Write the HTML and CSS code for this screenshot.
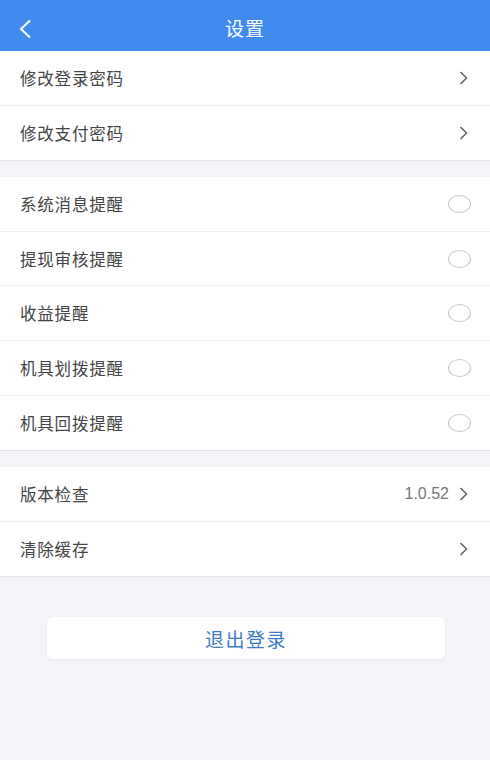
FILE: index.html
```html
<!DOCTYPE html>
<html>
<head>
  <meta charset="UTF-8">
  <title>设置</title>
  <link rel="stylesheet" href="styles.css">
</head>
<body>
  <!-- Title bar -->
  <header class="title-bar">
    <span class="back-btn">
      <svg width="14" height="20" viewBox="0 0 14 20"><path d="M12 1.5 L3 10 L12 18.5" fill="none" stroke="#fff" stroke-width="2"/></svg>
    </span>
    <h1 class="title">设置</h1>
  </header>

  <!-- Passwords -->
  <section class="group">
    <div class="row">
      <span class="label">修改登录密码</span>
      <span class="chevron"><svg width="9" height="14" viewBox="0 0 9 14"><path d="M1.5 1 L7.5 7 L1.5 13" fill="none" stroke="#666" stroke-width="1.6"/></svg></span>
    </div>
    <div class="row">
      <span class="label">修改支付密码</span>
      <span class="chevron"><svg width="9" height="14" viewBox="0 0 9 14"><path d="M1.5 1 L7.5 7 L1.5 13" fill="none" stroke="#666" stroke-width="1.6"/></svg></span>
    </div>
  </section>

  <!-- Notifications -->
  <section class="group">
    <div class="row">
      <span class="label">系统消息提醒</span>
      <span class="radio"></span>
    </div>
    <div class="row">
      <span class="label">提现审核提醒</span>
      <span class="radio"></span>
    </div>
    <div class="row">
      <span class="label">收益提醒</span>
      <span class="radio"></span>
    </div>
    <div class="row">
      <span class="label">机具划拨提醒</span>
      <span class="radio"></span>
    </div>
    <div class="row">
      <span class="label">机具回拨提醒</span>
      <span class="radio"></span>
    </div>
  </section>

  <!-- App -->
  <section class="group">
    <div class="row">
      <span class="label">版本检查</span>
      <span class="value">1.0.52</span>
      <span class="chevron"><svg width="9" height="14" viewBox="0 0 9 14"><path d="M1.5 1 L7.5 7 L1.5 13" fill="none" stroke="#666" stroke-width="1.6"/></svg></span>
    </div>
    <div class="row">
      <span class="label">清除缓存</span>
      <span class="chevron"><svg width="9" height="14" viewBox="0 0 9 14"><path d="M1.5 1 L7.5 7 L1.5 13" fill="none" stroke="#666" stroke-width="1.6"/></svg></span>
    </div>
  </section>

  <div class="logout-wrap">
    <div class="logout-btn">退出登录</div>
  </div>
</body>
</html>
```

FILE: styles.css
```css
/* ========== PAGE ========== */
html, body {
  margin: 0;
  padding: 0;
}

body {
  background: #f4f5f9;
  font-family: "Noto Sans CJK SC", "Noto Sans", sans-serif;
  min-height: 760px;
}

/* ========== TITLE BAR ========== */
.title-bar {
  height: 51px;
  background: #418bef;
  display: flex;
  align-items: center;
  justify-content: center;
  position: relative;
}

.back-btn {
  position: absolute;
  left: 18px;
  top: 19px;
  display: flex;
}

.title {
  margin: 4px 0 0;
  font-size: 19px;
  font-weight: normal;
  color: #fff;
  letter-spacing: 1px;
}

/* ========== GROUPS & ROWS ========== */
.group {
  background: #fff;
  margin-bottom: 16px;
  border-bottom: 1px solid #e6e7ec;
}

.row {
  height: 54.6px;
  box-sizing: border-box;
  display: flex;
  align-items: center;
  padding: 0 19px 0 20px;
  border-bottom: 1px solid #eeeff3;
}

.row:last-child {
  border-bottom: none;
}

.label {
  flex: 1;
  font-size: 16.5px;
  color: #444;
  letter-spacing: 0.8px;
}

.value {
  font-size: 16px;
  color: #777;
  margin-right: 10px;
  font-family: "Liberation Sans", "Noto Sans", sans-serif;
}

.chevron {
  display: flex;
  margin-right: 3px;
}

/* Unchecked switch, drawn as an oval */
.radio {
  width: 21px;
  height: 16px;
  border: 1px solid #c6c6c6;
  border-radius: 50%;
}

/* ========== LOGOUT ========== */
.logout-wrap {
  padding: 24px 45px 0 47px;
}

.logout-btn {
  height: 42px;
  background: #fff;
  border-radius: 6px;
  box-shadow: 0 1px 3px rgba(0, 0, 0, 0.05);
  display: flex;
  align-items: center;
  justify-content: center;
  font-size: 19px;
  color: #3b7bc2;
  letter-spacing: 1.5px;
}
```
